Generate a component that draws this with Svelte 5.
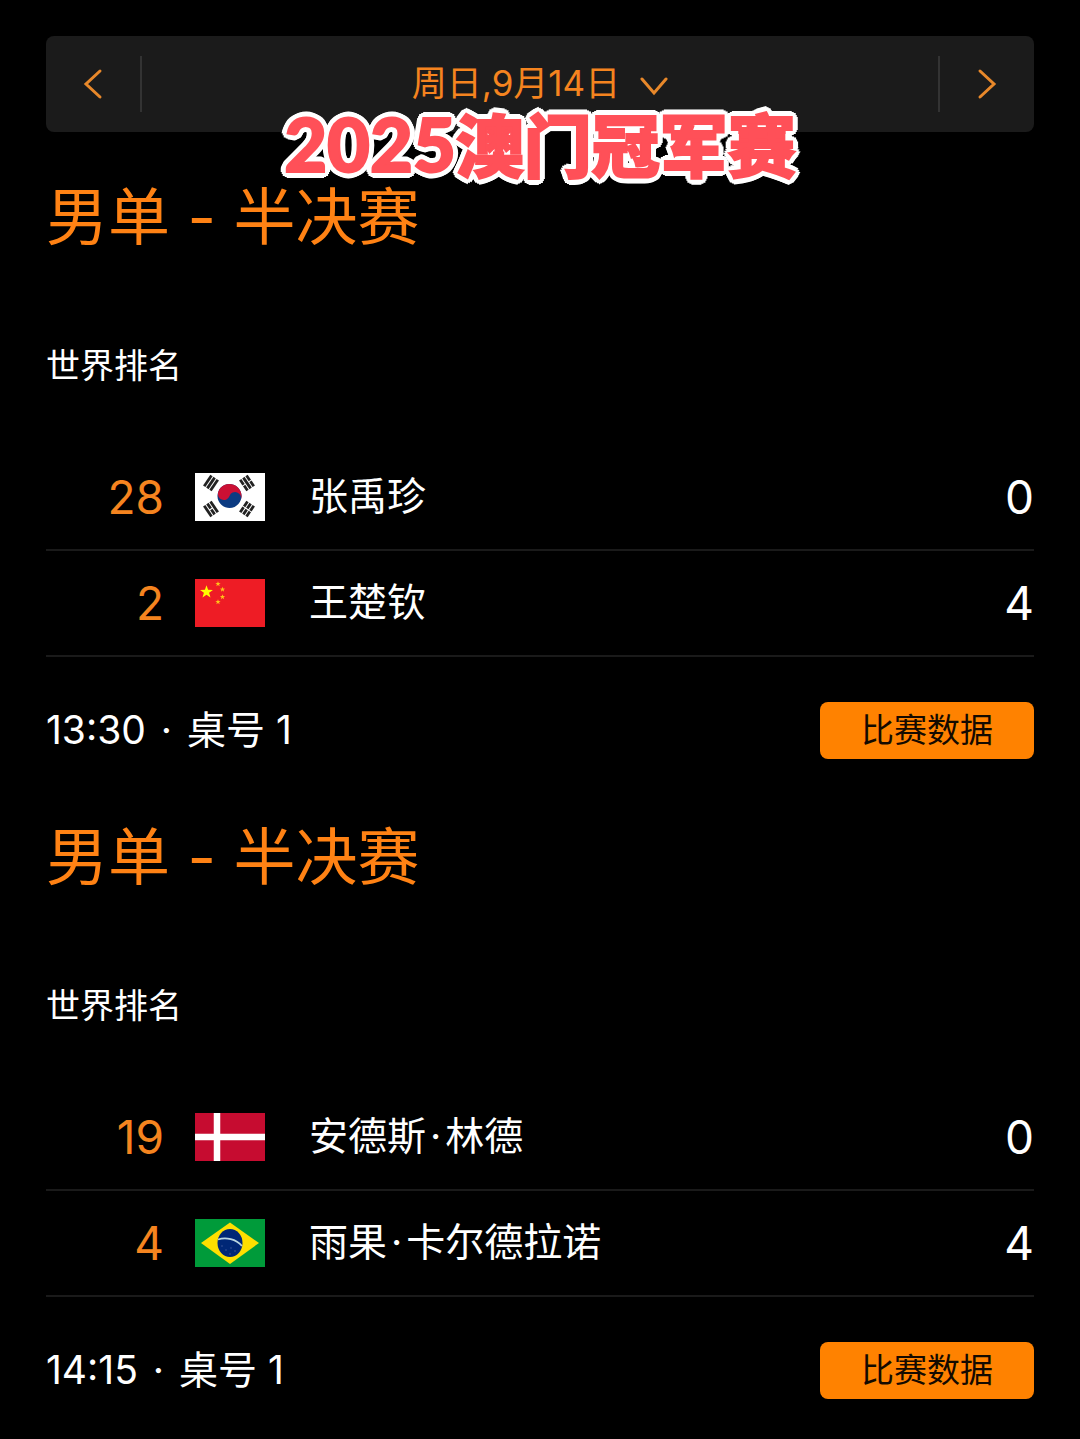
<script lang="ts">
  type Player = { rank: number; flag: string; country: string; name: string; score: number };
  type Match = { round: string; time: string; table: string; players: Player[] };

  const matches: Match[] = [
    {
      round: '男单 - 半决赛',
      time: '13:30',
      table: '桌号 1',
      players: [
        { rank: 28, flag: 'kr', country: '韩国', name: '张禹珍', score: 0 },
        { rank: 2, flag: 'cn', country: '中国', name: '王楚钦', score: 4 },
      ],
    },
    {
      round: '男单 - 半决赛',
      time: '14:15',
      table: '桌号 1',
      players: [
        { rank: 19, flag: 'dk', country: '丹麦', name: '安德斯·林德', score: 0 },
        { rank: 4, flag: 'br', country: '巴西', name: '雨果·卡尔德拉诺', score: 4 },
      ],
    },
  ];

  // trigrams: centre and rotation, then which of the three bars are broken
  const trigrams = [
    { x: 16, y: 10, r: -56, broken: [false, false, false] },
    { x: 52, y: 10, r: 56, broken: [true, false, true] },
    { x: 16, y: 36, r: 56, broken: [false, true, false] },
    { x: 52, y: 36, r: -56, broken: [true, true, true] },
  ];

  const smallStars = [[23, 5], [27.5, 10.5], [27.5, 18], [23, 23]];

  function star(cx: number, cy: number, r: number) {
    return Array.from({ length: 10 }, (_, i) => {
      const a = (Math.PI / 5) * i - Math.PI / 2;
      const d = i % 2 ? r * 0.4 : r;
      return `${cx + d * Math.cos(a)},${cy + d * Math.sin(a)}`;
    }).join(' ');
  }
</script>

{#snippet flagIcon(code: string, label: string)}
  <svg class="flag" viewBox="0 0 70 48" role="img" aria-label={label}>
    {#if code === 'kr'}
      <rect width="70" height="48" fill="#fff" />
      <g transform="rotate(20 34.5 23)">
        <circle cx="34.5" cy="23" r="12" fill="#0b3b82" />
        <path d="M22.5 23a12 12 0 0 1 24 0a6 6 0 0 0-12 0a6 6 0 0 1-12 0z" fill="#cb1034" />
      </g>
      {#each trigrams as t}
        <g transform="translate({t.x} {t.y}) rotate({t.r})" stroke="#222" stroke-width="2.8">
          {#each t.broken as b, i}
            <path d={b ? `M-6.5 ${(i - 1) * 3.8}h6m1 0h6` : `M-6.5 ${(i - 1) * 3.8}h13`} />
          {/each}
        </g>
      {/each}
    {:else if code === 'cn'}
      <rect width="70" height="48" fill="#ee1c25" />
      <polygon points={star(11.5, 13, 6.8)} fill="#ff0" />
      {#each smallStars as [x, y]}
        <polygon points={star(x, y, 2.8)} fill="#ffc21a" />
      {/each}
    {:else if code === 'dk'}
      <rect width="70" height="48" fill="#c60c30" />
      <path d="M22 0v48M0 24h70" stroke="#fff" stroke-width="6.5" />
    {:else}
      <rect width="70" height="48" fill="#009b3a" />
      <path d="M6 24L35 3.5L64 24L35 45z" fill="#fedf00" />
      <ellipse cx="35" cy="24" rx="12.5" ry="14" fill="#002776" />
      <path d="M23 20.5C31 18 41 20 47 27" fill="none" stroke="#b9d6e0" stroke-width="1.8" />
      <g fill="#4a62a0">
        <circle cx="27" cy="27" r=".7" />
        <circle cx="31" cy="31" r=".7" />
        <circle cx="36" cy="29" r=".7" />
        <circle cx="40" cy="32" r=".7" />
        <circle cx="35" cy="35" r=".7" />
      </g>
    {/if}
  </svg>
{/snippet}

<main class="page">
  <header class="top">
    <nav class="datebar" aria-label="日期">
      <button class="step" aria-label="前一天">
        <svg width="20" height="32" viewBox="0 0 20 32"><path d="M17 3L3 16L17 29" /></svg>
      </button>
      <button class="date">
        <span>周日,9月14日</span>
        <svg width="28" height="20" viewBox="0 0 28 20"><path d="M2 3L14 17L26 3" /></svg>
      </button>
      <button class="step next" aria-label="后一天">
        <svg width="20" height="32" viewBox="0 0 20 32"><path d="M3 3L17 16L3 29" /></svg>
      </button>
    </nav>
    <h1 class="sticker"><span>2025</span>澳门冠军赛</h1>
  </header>

  {#each matches as m}
    <section class="match">
      <h2>{m.round}</h2>
      <table>
        <thead>
          <tr><th colspan="4">世界排名</th></tr>
        </thead>
        <tbody>
          {#each m.players as p}
            <tr>
              <td class="rank">{p.rank}</td>
              <td class="country">{@render flagIcon(p.flag, p.country)}</td>
              <td class="name">
                {#each p.name.split('·') as part, i}{#if i}<span class="dot">·</span>{/if}{part}{/each}
              </td>
              <td class="score">{p.score}</td>
            </tr>
          {/each}
        </tbody>
      </table>
      <div class="foot">
        <p>{m.time} <span class="dot">·</span> {m.table}</p>
        <button class="stats">比赛数据</button>
      </div>
    </section>
  {/each}
</main>

<style>
  :global(body) { background: #000; }

  .page {
    padding: 36px 46px 40px;
    font-family: Inter, 'Noto Sans CJK SC', sans-serif;
    color: #fff;
  }

  button {
    border: 0;
    padding: 0;
    background: none;
    font: inherit;
    color: inherit;
    cursor: pointer;
  }

  /* Date bar */
  .top { position: relative; margin-bottom: 36px; }

  .datebar {
    display: flex;
    align-items: center;
    height: 96px;
    border-radius: 8px;
    background: #1b1b1b;
    color: #f5841f;
  }

  .datebar svg {
    fill: none;
    stroke: #e8882a;
    stroke-width: 3;
    stroke-linecap: round;
  }

  .step {
    display: flex;
    align-items: center;
    justify-content: center;
    width: 96px;
    height: 56px;
    border-right: 2px solid #333;
  }
  .next { border-right: 0; border-left: 2px solid #333; }

  .date {
    flex: 1;
    display: flex;
    align-items: center;
    justify-content: center;
    gap: 20px;
    height: 96px;
    font-size: 35px;
    line-height: 40px;
  }
  .date span { padding-bottom: 2px; }
  .date svg { margin-top: 4px; }

  /* outline is a ring of shadows, so its corners stay round */
  .sticker {
    position: absolute;
    top: 63px;
    left: 0;
    right: 0;
    margin: 0;
    font: 900 68px/88px 'Noto Sans CJK SC', sans-serif;
    text-align: center;
    color: #ff5058;
    -webkit-text-stroke: 2px #ff5058;
    text-shadow:
      6px 0 #fff, -6px 0 #fff, 0 6px #fff, 0 -6px #fff,
      4px 4px #fff, -4px 4px #fff, 4px -4px #fff, -4px -4px #fff,
      5px 2px #fff, -5px 2px #fff, 5px -2px #fff, -5px -2px #fff,
      2px 5px #fff, -2px 5px #fff, 2px -5px #fff, -2px -5px #fff;
    pointer-events: none;
  }
  .sticker span { font-family: Lato, sans-serif; font-size: 74px; }

  /* Match */
  .match { margin-bottom: 49px; }

  h2 {
    margin: 0 0 74px;
    font-size: 62px;
    font-weight: 400;
    line-height: 100px;
    color: #ff8214;
  }

  table { width: 100%; border-collapse: collapse; }

  th {
    padding: 0 0 55px;
    font-size: 34px;
    font-weight: 400;
    line-height: 48px;
    text-align: left;
  }

  td { height: 104px; padding: 0; border-bottom: 2px solid #1a1a1a; }

  .rank {
    width: 118px;
    font-size: 46px;
    text-align: right;
    color: #f5841f;
  }

  .country { width: 145px; }
  .flag { display: block; width: 70px; height: 48px; margin-left: 31px; }
  td.name { height: 102px; padding-bottom: 2px; font-size: 39px; line-height: 56px; }
  .score { font-size: 46px; text-align: right; }

  .foot {
    display: flex;
    align-items: center;
    justify-content: space-between;
    margin-top: 45px;
  }

  .foot p { margin: 0; padding-bottom: 2px; font-size: 39px; line-height: 54px; }
  .dot { margin: 0 4px; }

  .stats {
    width: 214px;
    height: 57px;
    border-radius: 8px;
    background: #ff8200;
    font-size: 33px;
    line-height: 57px;
    color: #140a00;
  }
</style>
